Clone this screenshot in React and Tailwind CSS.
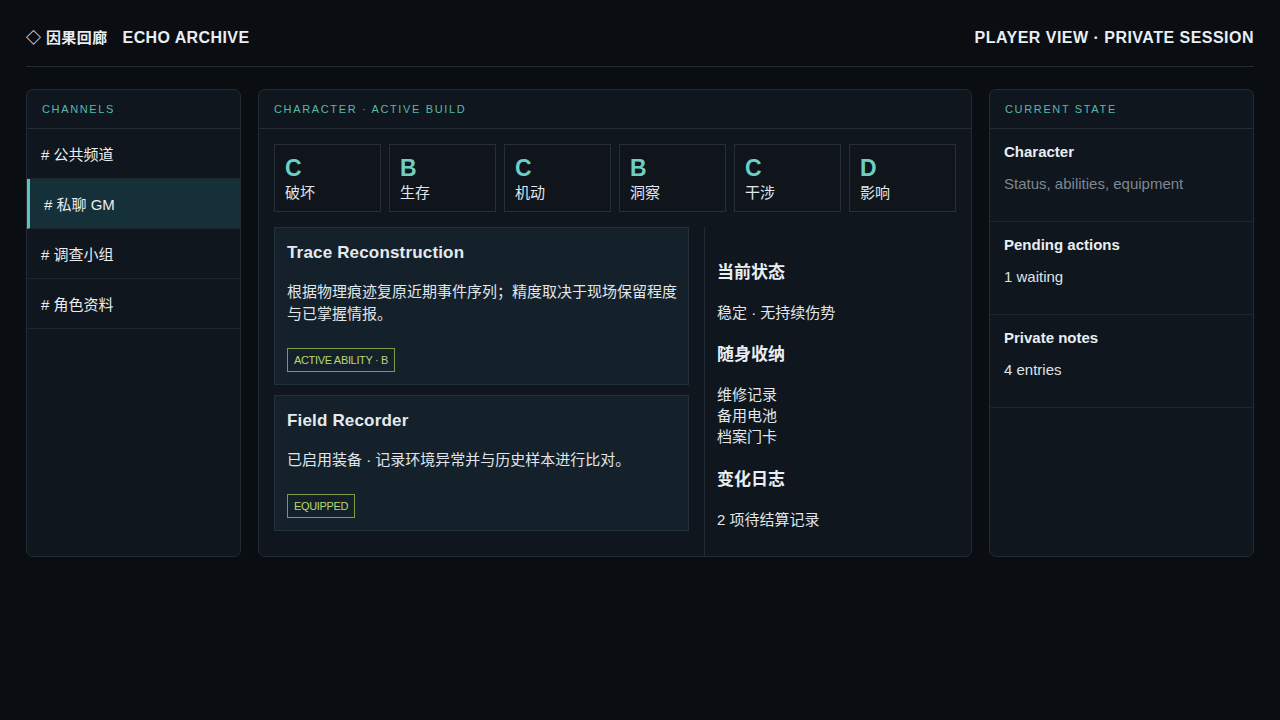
import React from "react";

const FONT = { fontFamily: '"Liberation Sans", "Noto Sans CJK SC", Arial, sans-serif' };

const stats = [
  ["C", "破坏"],
  ["B", "生存"],
  ["C", "机动"],
  ["B", "洞察"],
  ["C", "干涉"],
  ["D", "影响"],
];

const channels = ["# 公共频道", "# 私聊 GM", "# 调查小组", "# 角色资料"];

function PanelHeader({ children }) {
  return (
    <div className="h-[39px] flex items-center px-[15px] border-b border-[#222c35] text-[11px] tracking-[0.15em] text-[#58b8ad]">
      {children}
    </div>
  );
}

function Card({ title, body, tag }) {
  return (
    <div className="border border-[#233039] bg-[#14212a] pl-[12px] pr-[6px] pt-[13px] pb-[12px]">
      <div className="text-[17px] leading-[24px] font-bold text-[#e4eaef] tracking-[0.01em]">{title}</div>
      <div className="mt-[16px] text-[15px] leading-[22px] text-[#e0e6eb]">{body}</div>
      <div className="mt-[23px] flex">
        <span className="h-[24px] px-[6px] flex items-center border border-[#7f9c45] text-[11px] text-[#b9d873] tracking-[-0.03em]">
          {tag}
        </span>
      </div>
    </div>
  );
}

export default function App() {
  return (
    <div style={FONT} className="min-h-[720px] w-full bg-[#0a0d12] text-[#e4eaef] px-[26px]">
      <header className="flex items-center justify-between pt-[27px] pb-[17px] border-b border-[#232b38] leading-[22px]">
        <div className="flex items-center gap-[15px] font-bold tracking-[0.025em]">
          <span className="text-[15px] text-[#e8eef3]">◇ 因果回廊</span>
          <span className="text-[16px] text-[#e8eef3]">ECHO ARCHIVE</span>
        </div>
        <div className="text-[16px] font-bold text-[#e8eef3] tracking-[0.03em]">PLAYER VIEW · PRIVATE SESSION</div>
      </header>

      <main className="mt-[22px] flex gap-[17px] items-start">
        {/* Channels */}
        <section className="w-[215px] h-[468px] shrink-0 rounded-[7px] border border-[#222c35] bg-[#10161d] overflow-hidden">
          <PanelHeader>CHANNELS</PanelHeader>
          {channels.map((c, i) => (
            <div
              key={c}
              className={
                i === 1
                  ? "h-[50px] flex items-center pt-[3px] pl-[14px] pr-[14px] border-b border-[#1d262e] border-l-[3px] border-l-[#5cc4b8] bg-[#163039] text-[15px] text-[#e8eef3]"
                  : "h-[50px] flex items-center pt-[3px] px-[14px] border-b border-[#1d262e] text-[15px] text-[#e8eef3]"
              }
            >
              {c}
            </div>
          ))}
        </section>

        {/* Character */}
        <section className="w-[714px] h-[468px] shrink-0 rounded-[7px] border border-[#222c35] bg-[#10161d] overflow-hidden flex flex-col">
          <PanelHeader>CHARACTER · ACTIVE BUILD</PanelHeader>
          <div className="grid grid-cols-6 gap-[8px] px-[15px] pt-[15px] pb-[15px]">
            {stats.map(([g, l], i) => (
              <div key={i} className="h-[68px] border border-[#262f38] bg-[#0f151b] px-[10px] pt-[10px]">
                <div className="text-[23px] leading-[26px] font-bold text-[#6dcfc4]">{g}</div>
                <div className="mt-[2px] text-[15px] leading-[20px] text-[#e0e6eb]">{l}</div>
              </div>
            ))}
          </div>
          <div className="flex-1 grid grid-cols-[445px_1fr]">
            <div className="pl-[15px] pr-[15px] flex flex-col gap-[10px]">
              <Card
                title="Trace Reconstruction"
                body="根据物理痕迹复原近期事件序列；精度取决于现场保留程度与已掌握情报。"
                tag="ACTIVE ABILITY · B"
              />
              <Card
                title="Field Recorder"
                body="已启用装备 · 记录环境异常并与历史样本进行比对。"
                tag="EQUIPPED"
              />
            </div>
            <div className="border-l border-[#222c35] pl-[12px] pt-[34px] text-[#e0e6eb]">
              <div className="text-[17px] leading-[24px] font-bold text-[#e8eef3]">当前状态</div>
              <div className="mt-[17px] text-[15px] leading-[22px]">稳定 · 无持续伤势</div>
              <div className="mt-[19px] text-[17px] leading-[24px] font-bold text-[#e8eef3]">随身收纳</div>
              <div className="mt-[17px] text-[15px] leading-[21px]">
                <div>维修记录</div>
                <div>备用电池</div>
                <div>档案门卡</div>
              </div>
              <div className="mt-[21px] text-[17px] leading-[24px] font-bold text-[#e8eef3]">变化日志</div>
              <div className="mt-[17px] text-[15px] leading-[22px]">2 项待结算记录</div>
            </div>
          </div>
        </section>

        {/* Current state */}
        <section className="flex-1 h-[468px] rounded-[7px] border border-[#222c35] bg-[#10161d] overflow-hidden">
          <PanelHeader>CURRENT STATE</PanelHeader>
          {[
            ["Character", "Status, abilities, equipment", "text-[#7f878f]"],
            ["Pending actions", "1 waiting", "text-[#dde3e8]"],
            ["Private notes", "4 entries", "text-[#dde3e8]"],
          ].map(([t, s, c]) => (
            <div key={t} className="h-[93px] px-[14px] pt-[13px] border-b border-[#1d262e]">
              <div className="text-[15px] leading-[20px] font-bold text-[#e8eef3]">{t}</div>
              <div className={"mt-[12px] text-[15px] leading-[20px] " + c}>{s}</div>
            </div>
          ))}
        </section>
      </main>
    </div>
  );
}
